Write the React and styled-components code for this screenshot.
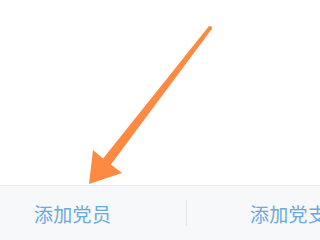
import React from 'react'
import styled, { createGlobalStyle } from 'styled-components'

const GlobalStyle = createGlobalStyle`
  html, body {
    margin: 0;
    padding: 0;
    background: #ffffff;
    font-family: "Noto Sans CJK SC", "Noto Sans", sans-serif;
  }
`

const Page = styled.div`
  width: 320px;
  height: 240px;
  display: flex;
  flex-direction: column;
  overflow: hidden;
`

const Canvas = styled.div`
  height: 185px;
  flex-shrink: 0;

  svg {
    display: block;
  }
`

const ActionBar = styled.div`
  height: 54px;
  border-top: 1px solid #ebebeb;
  background: #f7f8fa;
  display: flex;
  align-items: center;
  white-space: nowrap;
`

const Action = styled.div`
  width: ${p => p.$width};
  padding-left: ${p => p.$pad};
  box-sizing: border-box;
  flex-shrink: 0;
  font-size: 19px;
  letter-spacing: 0.3px;
  color: #6aa9dd;
`

const Divider = styled.div`
  width: 1px;
  height: 26px;
  background: #e4e6e9;
  flex-shrink: 0;
`

const Arrow = () => (
  <svg width="320" height="185" viewBox="0 0 320 185">
    <polygon
      fill="#fd8a42"
      points="208.4,26.8 211.6,29.2 110.9,164.6 122,173 89,184 93,150 103.1,158.4"
    />
    <circle cx="210" cy="28" r="2" fill="#fd8a42" />
  </svg>
)

export default function App() {
  return (
    <Page>
      <GlobalStyle />
      <Canvas>
        <Arrow />
      </Canvas>
      <ActionBar>
        <Action $width="186px" $pad="34px">添加党员</Action>
        <Divider />
        <Action $width="133px" $pad="63px">添加党支部</Action>
      </ActionBar>
    </Page>
  )
}
